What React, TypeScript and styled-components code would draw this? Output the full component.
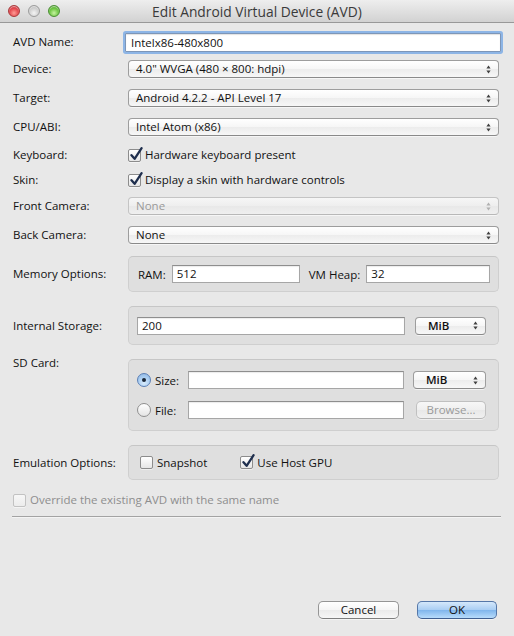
import React from 'react';
import styled, { createGlobalStyle } from 'styled-components';

const Global = createGlobalStyle`
  html, body { margin: 0; padding: 0; background: #e8e8e8; }
  body {
    font-family: "Open Sans", "DejaVu Sans", sans-serif;
    font-size: 11.5px;
    color: #111;
  }
  * { box-sizing: border-box; }
`;

const Window = styled.div`
  width: 514px;
  height: 636px;
  display: flex;
  flex-direction: column;
  background: #e8e8e8;
  overflow: hidden;
`;

const TitleBar = styled.div`
  flex: none;
  height: 23px;
  display: grid;
  grid-template-columns: 1fr auto 1fr;
  align-items: center;
  background: linear-gradient(#eeeeee, #d2d2d2);
  border-bottom: 1px solid #989898;
`;

const Lights = styled.div`
  display: flex;
  gap: 8px;
  padding-left: 8px;
`;

const Light = styled.span<{ $c: 'red' | 'gray' | 'green' }>`
  width: 12px;
  height: 12px;
  border-radius: 50%;
  border: 1px solid
    ${(p) => (p.$c === 'red' ? '#a8383a' : p.$c === 'green' ? '#4a8f33' : '#9c9c9c')};
  background: ${(p) =>
    p.$c === 'red'
      ? 'radial-gradient(circle at 50% 70%, #ff9d96 0%, #e2434a 55%, #b3252c 100%)'
      : p.$c === 'green'
      ? 'radial-gradient(circle at 50% 70%, #c6f3a0 0%, #69c43d 55%, #3f8f24 100%)'
      : 'radial-gradient(circle at 50% 70%, #f4f4f4 0%, #cfcfcf 55%, #a9a9a9 100%)'};
  box-shadow: inset 0 1px 1px rgba(255, 255, 255, 0.6);
`;

const Title = styled.div`
  font-size: 13.8px;
  color: #3a3a3a;
  white-space: nowrap;
`;

const Body = styled.div`
  flex: 1;
  display: flex;
  flex-direction: column;
  padding: 0 15px 17px 13px;
`;

const Row = styled.div<{ $mt: number; $h: number; $top?: boolean }>`
  display: grid;
  grid-template-columns: 115px 1fr;
  align-items: ${(p) => (p.$top ? 'start' : 'center')};
  margin-top: ${(p) => p.$mt}px;
  height: ${(p) => p.$h}px;
`;

const Label = styled.div<{ $shift?: number }>`
  line-height: 16px;
  white-space: nowrap;
  margin-top: ${(p) => p.$shift ?? 0}px;
`;

const NameInput = styled.div`
  height: 19px;
  margin: 0 -2px 0 -3px;
  background: #fff;
  border: 1px solid #7d96b8;
  box-shadow: 0 0 0 2px #8db5e6, inset 0 1px 1px rgba(0, 0, 0, 0.12);
  border-radius: 1px;
  padding: 0 5px;
  line-height: 17px;
  white-space: nowrap;
`;

const SelectBox = styled.div<{ $disabled?: boolean; $w?: number }>`
  height: 18px;
  ${(p) => (p.$w ? `width: ${p.$w}px;` : '')}
  display: flex;
  align-items: center;
  justify-content: space-between;
  padding: 0 7px 0 7px;
  border-radius: 4px;
  border: 1px solid ${(p) => (p.$disabled ? '#c4c4c4' : '#9d9d9d')};
  border-bottom-color: ${(p) => (p.$disabled ? '#b8b8b8' : '#8a8a8a')};
  background: ${(p) =>
    p.$disabled
      ? 'linear-gradient(#f6f6f6, #eeeeee 50%, #e8e8e8 51%, #efefef)'
      : 'linear-gradient(#ffffff, #f6f6f6 50%, #ececec 51%, #f7f7f7)'};
  color: ${(p) => (p.$disabled ? '#9a9a9a' : '#111')};
  box-shadow: 0 1px 0 rgba(255, 255, 255, 0.6);
  white-space: nowrap;
  line-height: 16px;
`;

const BoldText = styled.span`
  font-weight: 600;
  padding-left: 5px;
`;

const Arrows = ({ dim }: { dim?: boolean }) => (
  <svg width="5" height="9" viewBox="0 0 5 9" style={{ flex: 'none' }}>
    <path d="M2.5 0.5 L4.6 3.4 L0.4 3.4 Z" fill={dim ? '#b0b0b0' : '#404040'} />
    <path d="M2.5 8.5 L4.6 5.6 L0.4 5.6 Z" fill={dim ? '#b0b0b0' : '#404040'} />
  </svg>
);

const Select = ({
  value,
  disabled,
  w,
  bold,
}: {
  value: string;
  disabled?: boolean;
  w?: number;
  bold?: boolean;
}) => (
  <SelectBox $disabled={disabled} $w={w}>
    {bold ? <BoldText>{value}</BoldText> : <span>{value}</span>}
    <Arrows dim={disabled} />
  </SelectBox>
);

const CheckLine = styled.label<{ $dim?: boolean }>`
  display: flex;
  align-items: center;
  gap: 4px;
  white-space: nowrap;
  color: ${(p) => (p.$dim ? '#8e8e8e' : '#111')};
  line-height: 16px;
`;

const Box = styled.span<{ $dim?: boolean }>`
  position: relative;
  width: 13px;
  height: 13px;
  flex: none;
  border-radius: 2px;
  border: 1px solid ${(p) => (p.$dim ? '#c2c2c2' : '#8c8c8c')};
  background: ${(p) =>
    p.$dim ? 'linear-gradient(#f7f7f7, #ececec)' : 'linear-gradient(#ffffff, #e6e6e6)'};
  box-shadow: 0 1px 0 rgba(255, 255, 255, 0.5);
`;

const CheckMark = styled.svg`
  position: absolute;
  left: 1px;
  top: -3px;
`;

const Checkbox = ({ checked, dim, children }: { checked?: boolean; dim?: boolean; children: React.ReactNode }) => (
  <CheckLine $dim={dim}>
    <Box $dim={dim}>
      {checked && (
        <CheckMark width="13" height="14" viewBox="0 0 13 14">
          <path
            d="M1.5 8.2 L4.6 11.8 L11.6 1.2"
            fill="none"
            stroke="#1f2f4e"
            strokeWidth="2.3"
            strokeLinecap="round"
            strokeLinejoin="round"
          />
        </CheckMark>
      )}
    </Box>
    {children}
  </CheckLine>
);

const Radio = styled.span<{ $on?: boolean }>`
  width: 14px;
  height: 14px;
  flex: none;
  border-radius: 50%;
  display: flex;
  align-items: center;
  justify-content: center;
  border: 1px solid ${(p) => (p.$on ? '#5a7fb6' : '#8f8f8f')};
  background: ${(p) =>
    p.$on
      ? 'radial-gradient(circle at 50% 75%, #d6eafc 0%, #a9cdf1 55%, #8db4e0 100%)'
      : 'linear-gradient(#ffffff, #e4e4e4)'};
  &::after {
    content: '';
    width: 4px;
    height: 4px;
    border-radius: 50%;
    background: ${(p) => (p.$on ? '#1b2738' : 'transparent')};
  }
`;

const RadioLine = styled.div`
  display: flex;
  align-items: center;
  gap: 4px;
  white-space: nowrap;
`;

const Group = styled.div<{ $pl: number; $pr: number }>`
  height: 100%;
  display: flex;
  align-items: center;
  padding: 0 ${(p) => p.$pr}px 0 ${(p) => p.$pl}px;
  border-radius: 5px;
  border: 1px solid #cfcfcf;
  border-top-color: #c6c6c6;
  background: #dfdfdf;
`;

const SdGroup = styled.div`
  height: 100%;
  display: grid;
  grid-template-columns: 51px 216px 1fr;
  grid-template-rows: 20px 20px;
  row-gap: 10px;
  align-items: center;
  padding: 10px 12px 0 8px;
  border-radius: 5px;
  border: 1px solid #cfcfcf;
  border-top-color: #c6c6c6;
  background: #dfdfdf;
`;

const TextField = styled.div<{ $w?: number; $flex?: boolean }>`
  height: 18px;
  ${(p) => (p.$w ? `width: ${p.$w}px;` : '')}
  ${(p) => (p.$flex ? 'flex: 1;' : '')}
  background: #fff;
  border: 1px solid #a6a6a6;
  border-top-color: #8e8e8e;
  box-shadow: inset 0 1px 1px rgba(0, 0, 0, 0.08);
  padding: 0 4px;
  line-height: 16px;
  white-space: nowrap;
`;

const InlineLabel = styled.span<{ $ml?: number }>`
  margin: 0 6px 0 ${(p) => p.$ml ?? 0}px;
  white-space: nowrap;
`;

const Cell = styled.div`
  padding-left: 9px;
  display: flex;
  justify-content: flex-end;
`;

const Button = styled.div<{ $primary?: boolean; $disabled?: boolean; $w: number }>`
  width: ${(p) => p.$w}px;
  height: 18px;
  display: flex;
  align-items: center;
  justify-content: center;
  border-radius: 5px;
  white-space: nowrap;
  line-height: 16px;
  color: ${(p) => (p.$disabled ? '#9a9a9a' : '#111')};
  border: 1px solid ${(p) => (p.$primary ? '#5577a8' : p.$disabled ? '#c0c0c0' : '#959595')};
  border-bottom-color: ${(p) => (p.$primary ? '#3f5f90' : p.$disabled ? '#b4b4b4' : '#7f7f7f')};
  background: ${(p) =>
    p.$primary
      ? 'linear-gradient(#d4e8fb, #a8cdf3 50%, #7fb5ec 51%, #b8dcfb)'
      : p.$disabled
      ? 'linear-gradient(#f7f7f7, #efefef 50%, #e8e8e8 51%, #f0f0f0)'
      : 'linear-gradient(#ffffff, #f5f5f5 50%, #ebebeb 51%, #f7f7f7)'};
  box-shadow: 0 1px 0 rgba(255, 255, 255, 0.5);
`;

const EmuItems = styled.div`
  display: flex;
  align-items: center;
  gap: 33px;
`;

const Separator = styled.div`
  margin: 7px -2px 0 -1px;
  height: 2px;
  border-top: 1px solid #a3a3a3;
  border-bottom: 1px solid #f4f4f4;
`;

const Footer = styled.div`
  margin-top: auto;
  display: flex;
  justify-content: flex-end;
  gap: 18px;
  padding-right: 2px;
`;

export default function App() {
  return (
    <>
      <Global />
      <Window>
        <TitleBar>
          <Lights>
            <Light $c="red" />
            <Light $c="gray" />
            <Light $c="green" />
          </Lights>
          <Title>Edit Android Virtual Device (AVD)</Title>
          <div />
        </TitleBar>
        <Body>
          <Row $mt={9} $h={20}>
            <Label>AVD Name:</Label>
            <NameInput>Intelx86-480x800</NameInput>
          </Row>
          <Row $mt={8} $h={18}>
            <Label>Device:</Label>
            <Select value={'4.0" WVGA (480 × 800: hdpi)'} />
          </Row>
          <Row $mt={11} $h={18}>
            <Label>Target:</Label>
            <Select value="Android 4.2.2 - API Level 17" />
          </Row>
          <Row $mt={11} $h={18}>
            <Label>CPU/ABI:</Label>
            <Select value="Intel Atom (x86)" />
          </Row>
          <Row $mt={10} $h={18}>
            <Label>Keyboard:</Label>
            <Checkbox checked>Hardware keyboard present</Checkbox>
          </Row>
          <Row $mt={7} $h={18}>
            <Label>Skin:</Label>
            <Checkbox checked>Display a skin with hardware controls</Checkbox>
          </Row>
          <Row $mt={8} $h={18}>
            <Label>Front Camera:</Label>
            <Select value="None" disabled />
          </Row>
          <Row $mt={11} $h={18}>
            <Label>Back Camera:</Label>
            <Select value="None" />
          </Row>
          <Row $mt={12} $h={36}>
            <Label>Memory Options:</Label>
            <Group $pl={9} $pr={8}>
              <InlineLabel>RAM:</InlineLabel>
              <TextField $w={128}>512</TextField>
              <InlineLabel $ml={9}>VM Heap:</InlineLabel>
              <TextField $flex>32</TextField>
            </Group>
          </Row>
          <Row $mt={14} $h={39}>
            <Label>Internal Storage:</Label>
            <Group $pl={8} $pr={12}>
              <TextField $w={268}>200</TextField>
              <Cell style={{ paddingLeft: 10, flex: 1 }}>
                <Select value="MiB" w={71} bold />
              </Cell>
            </Group>
          </Row>
          <Row $mt={14} $h={72} $top>
            <Label $shift={-4}>SD Card:</Label>
            <SdGroup>
              <RadioLine>
                <Radio $on />
                Size:
              </RadioLine>
              <TextField />
              <Cell>
                <Select value="MiB" w={73} bold />
              </Cell>
              <RadioLine>
                <Radio />
                File:
              </RadioLine>
              <TextField />
              <Cell>
                <Button $w={70} $disabled>
                  Browse...
                </Button>
              </Cell>
            </SdGroup>
          </Row>
          <Row $mt={14} $h={35}>
            <Label>Emulation Options:</Label>
            <Group $pl={11} $pr={10}>
              <EmuItems>
                <Checkbox>Snapshot</Checkbox>
                <Checkbox checked>Use Host GPU</Checkbox>
              </EmuItems>
            </Group>
          </Row>
          <Row $mt={11} $h={18}>
            <Checkbox dim>Override the existing AVD with the same name</Checkbox>
          </Row>
          <Separator />
          <Footer>
            <Button $w={81}>Cancel</Button>
            <Button $w={80} $primary>
              OK
            </Button>
          </Footer>
        </Body>
      </Window>
    </>
  );
}
